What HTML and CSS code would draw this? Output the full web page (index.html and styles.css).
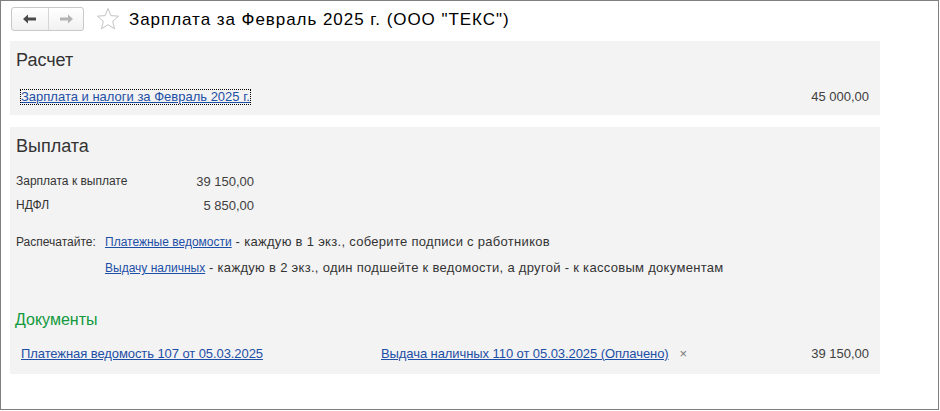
FILE: index.html
```html
<!DOCTYPE html>
<html lang="ru">
<head>
<meta charset="utf-8">
<link rel="stylesheet" href="styles.css">
</head>
<body>
<div class="window">
  <div class="header">
    <div class="nav">
      <button class="nav-btn" type="button" aria-label="Назад">
        <svg width="14" height="10" viewBox="0 0 14 10"><path d="M0 5 L5 0.5 L5 3.5 L13 3.5 L13 6.5 L5 6.5 L5 9.5 Z" fill="#4a4a4a"/></svg>
      </button>
      <button class="nav-btn" type="button" aria-label="Вперед">
        <svg width="14" height="10" viewBox="0 0 14 10"><path d="M14 5 L9 0.5 L9 3.5 L1 3.5 L1 6.5 L9 6.5 L9 9.5 Z" fill="#b4b4b4"/></svg>
      </button>
    </div>
    <svg class="star" width="24" height="24" viewBox="0 0 24 24"><path d="M12 1.5 L14.9 8.6 L22.6 9.2 L16.7 14.2 L18.6 21.8 L12 17.7 L5.4 21.8 L7.3 14.2 L1.4 9.2 L9.1 8.6 Z" fill="none" stroke="#c4c4c4" stroke-width="1"/></svg>
    <h1 class="title">Зарплата за Февраль 2025 г. (ООО "ТЕКС")</h1>
  </div>

  <section class="panel panel-calc">
    <h2 class="panel-title">Расчет</h2>
    <div class="calc-row">
      <a class="link link-num link-focus" href="#">Зарплата и налоги за Февраль 2025 г.</a>
      <span class="amount">45 000,00</span>
    </div>
  </section>

  <section class="panel panel-pay">
    <h2 class="panel-title">Выплата</h2>
    <div class="sum-grid">
      <span class="sum-label">Зарплата к выплате</span><span class="sum-value">39 150,00</span>
      <span class="sum-label">НДФЛ</span><span class="sum-value">5 850,00</span>
    </div>
    <div class="print">
      <span class="print-label">Распечатайте:</span>
      <div class="print-lines">
        <div><a class="link" href="#">Платежные ведомости</a><span class="desc"> - каждую в 1 экз., соберите подписи с работников</span></div>
        <div><a class="link" href="#">Выдачу наличных</a><span class="desc"> - каждую в 2 экз., один подшейте к ведомости, а другой - к кассовым документам</span></div>
      </div>
    </div>
    <h3 class="docs-title">Документы</h3>
    <div class="docs-row">
      <a class="link link-num doc-link doc-first" href="#">Платежная ведомость 107 от 05.03.2025</a>
      <a class="link link-num doc-link" href="#">Выдача наличных 110 от 05.03.2025 (Оплачено)</a>
      <span class="remove">×</span>
      <span class="amount">39 150,00</span>
    </div>
  </section>
</div>
</body>
</html>
```

FILE: styles.css
```css
* { box-sizing: border-box; }
html, body { margin: 0; padding: 0; background: #fff; }
body {
  font-family: "Liberation Sans", Arial, sans-serif;
  font-size: 12px;
  color: #333;
}
.window {
  width: 939px;
  height: 410px;
  border: 1px solid #7f7f7f;
  background: #fff;
}
.header {
  display: flex;
  align-items: flex-start;
  height: 40px;
  padding: 6px 0 0 10px;
}
.nav {
  display: flex;
  height: 24px;
  border: 1px solid #c9c9c9;
  border-radius: 3px;
  background: linear-gradient(#ffffff, #f1f1f1);
}
.nav-btn {
  width: 36px;
  height: 22px;
  padding: 0;
  margin: 0;
  border: 0;
  background: transparent;
  display: flex;
  align-items: center;
  justify-content: center;
}
.nav-btn + .nav-btn { border-left: 1px solid #d6d6d6; width: 35px; }
.star { margin: 0 0 0 12px; }
.title {
  margin: 0 0 0 9px;
  font-size: 17px;
  letter-spacing: 0.95px;
  font-weight: normal;
  line-height: 25px;
  color: #000;
}
.panel {
  margin-left: 9px;
  width: 870px;
  background: #f3f3f3;
}
.panel-title {
  margin: 0;
  padding-left: 6px;
  font-size: 18px;
  line-height: 20px;
  font-weight: normal;
  color: #333;
}
.panel-calc { padding: 9px 11px 11px 0; height: 74px; }
.calc-row {
  display: flex;
  justify-content: space-between;
  align-items: center;
  margin-top: 19px;
  padding-left: 10px;
  line-height: 14px;
}
.link { color: #1d4fa6; text-decoration: underline; }
.link-num { font-size: 13px; }
.doc-link { letter-spacing: -0.08px; }
.link-focus { border: 1px dotted #000; }
.amount { color: #404040; font-size: 13px; }
.panel-pay {
  margin-top: 12px;
  padding: 9px 11px 12px 0;
  height: 247px;
}
.sum-grid {
  display: grid;
  grid-template-columns: 170px 68px;
  grid-auto-rows: 24px;
  align-items: center;
  margin-top: 13px;
  padding-left: 6px;
}
.sum-value { text-align: right; color: #404040; font-size: 13px; }
.print {
  display: flex;
  margin-top: 12px;
  padding-left: 6px;
  line-height: 26px;
}
.print-label { width: 89px; flex: none; }
.desc { font-size: 13px; letter-spacing: 0.3px; }
.docs-title {
  margin: 29px 0 0;
  padding-left: 5px;
  font-size: 16px;
  line-height: 20px;
  font-weight: normal;
  color: #12993d;
}
.docs-row {
  display: flex;
  align-items: center;
  margin-top: 16px;
  padding-left: 11px;
  line-height: 16px;
}
.doc-first { width: 360px; flex: none; }
.remove { margin-left: 11px; color: #777; font-size: 13px; }
.docs-row .amount { margin-left: auto; }
```
